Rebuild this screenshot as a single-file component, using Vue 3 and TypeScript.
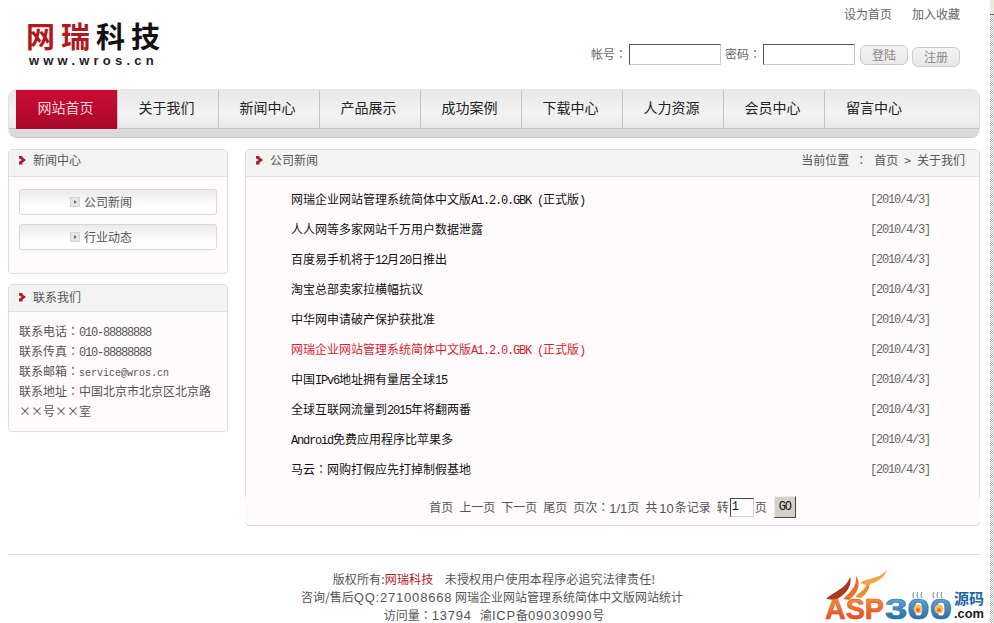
<script setup lang="ts">
const navItems = ['网站首页', '关于我们', '新闻中心', '产品展示', '成功案例', '下载中心', '人力资源', '会员中心', '留言中心']

type Part = { t: string; lat?: boolean; cl?: boolean }
type Row = { parts: Part[]; red?: boolean }

const product: Part[] = [
  { t: '网瑞企业网站管理系统简体中文版' },
  { t: 'A1.2.0.GBK (', lat: true },
  { t: '正式版' },
  { t: ')', lat: true },
]

const rows: Row[] = [
  { parts: product },
  { parts: [{ t: '人人网等多家网站千万用户数据泄露' }] },
  { parts: [{ t: '百度易手机将于' }, { t: '12', lat: true }, { t: '月' }, { t: '20', lat: true }, { t: '日推出' }] },
  { parts: [{ t: '淘宝总部卖家拉横幅抗议' }] },
  { parts: [{ t: '中华网申请破产保护获批准' }] },
  { parts: product, red: true },
  { parts: [{ t: '中国' }, { t: 'IPv6', lat: true }, { t: '地址拥有量居全球' }, { t: '15', lat: true }] },
  { parts: [{ t: '全球互联网流量到' }, { t: '2015', lat: true }, { t: '年将翻两番' }] },
  { parts: [{ t: 'Android', lat: true }, { t: '免费应用程序比苹果多' }] },
  { parts: [{ t: '马云' }, { t: '：', cl: true }, { t: '网购打假应先打掉制假基地' }] },
]
</script>

<template>
  <div class="page">
    <div class="scroll-edge"></div>
    <header class="top">
      <div class="logo">
        <div class="logo-cn"><span class="logo-red">网瑞</span><span>科技</span></div>
        <div class="logo-en">www.wros.cn</div>
      </div>
      <div class="top-right">
        <div class="links"><a>设为首页</a><a>加入收藏</a></div>
        <div class="login">
          <label>帐号<span class="cl">：</span></label><input class="field" type="text" />
          <label>密码<span class="cl">：</span></label><input class="field" type="password" />
          <button class="soft-btn" type="button">登陆</button>
          <button class="soft-btn lower" type="button">注册</button>
        </div>
      </div>
    </header>

    <nav class="nav">
      <a v-for="(n, i) in navItems" :key="n" class="nav-item" :class="{ active: i === 0, last: i === navItems.length - 1 }">{{ n }}</a>
    </nav>

    <main class="content">
      <aside class="side">
        <section class="box news-box">
          <h3 class="box-head"><i class="mark"></i>新闻中心</h3>
          <div class="cat-list">
            <a class="cat"><i class="tri"></i>公司新闻</a>
            <a class="cat"><i class="tri"></i>行业动态</a>
          </div>
        </section>
        <section class="box contact-box">
          <h3 class="box-head contact-head"><i class="mark"></i>联系我们</h3>
          <div class="contact">
            <p>联系电话<span class="cl">：</span><span class="lat">010-88888888</span></p>
            <p>联系传真<span class="cl">：</span><span class="lat">010-88888888</span></p>
            <p>联系邮箱<span class="cl">：</span><span class="mail">service@wros.cn</span></p>
            <p>联系地址<span class="cl">：</span>中国北京市北京区北京路××号××室</p>
          </div>
        </section>
      </aside>

      <section class="box list-box">
        <h3 class="box-head list-head">
          <span class="head-left"><i class="mark"></i>公司新闻</span>
          <span class="crumb"><span>当前位置</span><span class="cl">：</span><span>首页</span><span>&gt;</span><span>关于我们</span></span>
        </h3>
        <ul class="rows">
          <li v-for="(r, i) in rows" :key="i" class="row" :class="{ red: r.red }">
            <span class="title"><span v-for="(p, j) in r.parts" :key="j" :class="{ lat: p.lat, cl: p.cl }">{{ p.t }}</span></span>
            <span class="date">[2010/4/3]</span>
          </li>
        </ul>
        <div class="pager">
          <span>首页</span><span>上一页</span><span>下一页</span><span>尾页</span>
          <span>页次<span class="cl">：</span><b class="pg-num">1/1</b>页</span>
          <span>共<b class="pg-num wide">10</b>条记录</span>
          <span class="goto">转<input class="pg-input" type="text" value="1" />页</span>
          <button class="go" type="button">GO</button>
        </div>
      </section>
    </main>

    <footer class="foot">
      <p class="line-one">版权所有:<span class="foot-red">网瑞科技</span>&nbsp;&nbsp;&nbsp; 未授权用户使用本程序必追究法律责任!</p>
      <p class="line-two">咨询/售后<span class="foot-lat">QQ:271008668</span> 网瑞企业网站管理系统简体中文版网站统计</p>
      <p>访问量<span class="cl">：</span><span class="foot-lat">13794</span> &nbsp; 渝<span class="foot-lat">ICP</span>备<span class="foot-lat">09030990</span>号</p>
      <svg class="wm" width="166" height="54" viewBox="0 0 166 54" aria-label="ASP300源码">
        <defs>
          <linearGradient id="asp" x1="0" y1="0" x2="0" y2="1">
            <stop offset="0" stop-color="#f6a33c" />
            <stop offset="1" stop-color="#e03a1e" />
          </linearGradient>
          <linearGradient id="three" x1="0" y1="0" x2="0" y2="1">
            <stop offset="0" stop-color="#6bb4e0" />
            <stop offset="1" stop-color="#1c5c9c" />
          </linearGradient>
        </defs>
        <path d="M4 30 C12 22 24 20 28 8 C31 18 22 27 13 31 Z" fill="#a83a24" />
        <path d="M21 30 C28 23 35 18 34 7 C40 15 35 25 27 31 Z" fill="#ea6f2a" />
        <path d="M33 28 C39 22 46 19 46 10 C50 16 46 24 39 29 Z" fill="#f08c34" />
        <path d="M38 14 C46 8 56 11 65 1 C63 9 54 14 44 16 Z" fill="#f2a544" />
        <text x="3" y="50" class="wm-big" fill="url(#asp)" stroke="#e2521f" stroke-width="0.6" textLength="59" lengthAdjust="spacingAndGlyphs">ASP</text>
        <text x="63" y="50" class="wm-big" fill="url(#three)" stroke="#2a70ac" stroke-width="0.6" textLength="67" lengthAdjust="spacingAndGlyphs">300</text>
        <circle cx="96" cy="40" r="4.5" fill="#f4c060" />
        <circle cx="117" cy="40" r="4.5" fill="#f4c060" />
        <circle cx="96" cy="41" r="2" fill="#e8702c" />
        <circle cx="117" cy="41" r="2" fill="#e8702c" />
        <path d="M92 29 q-2 -3 0 -6 M96 29 q-2 -3 0 -6 M100 29 q-2 -3 0 -6 M112 29 q-2 -3 0 -6 M116 29 q-2 -3 0 -6 M120 29 q-2 -3 0 -6" stroke="#8c9aa4" stroke-width="1.1" fill="none" />
        <text x="132" y="35" class="wm-yuan" fill="#1c64a8">源码</text>
        <text x="132" y="49" class="wm-com" fill="#222" textLength="30" lengthAdjust="spacingAndGlyphs">.com</text>
      </svg>
    </footer>
  </div>
</template>

<style>
html, body { margin: 0; background: #fff; overflow: hidden; }
</style>

<style scoped>
.page {
  position: relative;
  width: 994px;
  height: 623px;
  overflow: hidden;
  padding: 0 14px 0 8px;
  box-sizing: border-box;
  font: 12px/20px "Noto Sans CJK SC", "Liberation Sans", sans-serif;
  color: #555;
  background: #fff;
}
.cl { font-family: "Noto Sans CJK TC", "Noto Sans CJK SC", sans-serif; }
.scroll-edge {
  position: absolute;
  right: 0;
  top: 0;
  bottom: 0;
  width: 4px;
  background: repeating-conic-gradient(#bdbdbd 0 25%, #fff 0 50%) 0 0 / 2px 2px;
}
.scroll-edge::before {
  content: "";
  display: block;
  height: 14px;
  background: #ece9dc;
  border-bottom: 1px solid #666;
}
.top { display: flex; justify-content: space-between; height: 89px; }
.logo { padding: 18px 0 0 18px; }
.logo-cn {
  font-size: 29px;
  line-height: 34px;
  font-weight: 700;
  letter-spacing: 6px;
  color: #111;
}
.logo-red { color: #b01a1e; }
.logo-en {
  margin-top: 1px;
  font: 700 13px/15px "Liberation Sans", sans-serif;
  letter-spacing: 4.2px;
  color: #222;
  padding-left: 3px;
}
.top-right { display: flex; flex-direction: column; align-items: flex-end; padding-right: 20px; }
.links { display: flex; gap: 20px; padding-top: 4px; height: 44px; box-sizing: border-box; color: #666; }
.login { display: flex; align-items: flex-start; height: 30px; color: #666; }
.login label { line-height: 20px; margin-right: 2px; }
.field {
  width: 90px;
  height: 19px;
  padding: 0;
  margin: 0 4px 0 0;
  box-sizing: content-box;
  border: 1px solid #ccc;
  border-top-color: #555;
  border-left-color: #555;
  background: #fff;
}
.soft-btn {
  width: 48px;
  height: 20px;
  margin: 1px 4px 0 1px;
  padding: 0;
  border: 1px solid #ccc;
  border-radius: 6px;
  background: linear-gradient(#f4f4f4, #e8e8e8);
  color: #888;
  font: inherit;
  line-height: 16px;
}
.soft-btn.lower { margin: 3px 0 0 0; }
.nav {
  display: flex;
  height: 48px;
  padding-left: 8px;
  border: 1px solid #ddd;
  border-top: 0;
  border-bottom: 1px solid #c9c9c9;
  border-radius: 9px;
  box-sizing: content-box;
  width: 962px;
  background: linear-gradient(#e8e8e8 0, #f3f3f3 26px, #e8e8e8 39px, #c4c4c4 39px, #c4c4c4 40px, #dcdcdc 40px, #d8d8d8 100%);
}
.nav-item {
  width: 101px;
  height: 39px;
  margin-top: 1px;
  padding-right: 3px;
  border-right: 1px solid #c4c4c4;
  box-sizing: border-box;
  text-align: center;
  font-size: 14px;
  line-height: 34px;
  color: #222;
}
.nav-item.last { border-right: 0; }
.nav-item.active {
  width: 102px;
  margin-left: -1px;
  padding-right: 2px;
  background: linear-gradient(#cb0c35, #a8082a) padding-box;
  color: #f5d8df;
}
.content { display: flex; align-items: flex-start; gap: 17px; margin-top: 11px; }
.side { width: 220px; flex: none; display: flex; flex-direction: column; gap: 10px; }
.box {
  border: 1px solid #ddd;
  border-radius: 4px;
  background: #fffbfd;
  box-sizing: border-box;
}
.box-head {
  display: flex;
  align-items: center;
  height: 20px;
  margin: 0;
  padding: 0 0 6px 10px;
  background: #f4f3f3;
  border-bottom: 1px solid #e2e2e2;
  font-size: 12px;
  font-weight: 400;
  color: #555;
}
.contact-head { height: 24px; padding-bottom: 2px; }
.mark {
  width: 7px;
  height: 9px;
  margin-right: 7px;
  flex: none;
  background: #a8202a;
  clip-path: polygon(0 0, 50% 0, 50% 20%, 100% 50%, 50% 80%, 50% 100%, 0 100%, 0 70%, 40% 50%, 0 30%);
}
.news-box { height: 125px; }
.contact-box { height: 148px; }
.cat-list { display: flex; flex-direction: column; gap: 9px; padding: 12px 10px 0; }
.cat {
  display: flex;
  align-items: center;
  height: 26px;
  padding-left: 50px;
  box-sizing: border-box;
  border: 1px solid #d8d8d8;
  border-radius: 3px;
  background: linear-gradient(#eaeaea 0, #f8f8f8 45%, #fff 70%);
  color: #555;
}
.tri {
  position: relative;
  width: 10px;
  height: 10px;
  margin-right: 4px;
  background: #e6e6e6;
  border: 1px solid #d4d4d4;
  box-sizing: border-box;
}
.tri::after {
  content: "";
  position: absolute;
  left: 3px;
  top: 2px;
  border-left: 3px solid #777;
  border-top: 2px solid transparent;
  border-bottom: 2px solid transparent;
}
.contact { padding: 9px 10px 0; }
.contact p { margin: 0; line-height: 20px; }
.lat {
  font-family: "Liberation Mono", monospace;
  letter-spacing: -1.2px;
  line-height: 1;
}
.mail {
  font: 10px/1 "Liberation Mono", monospace;
}
.list-box { width: 735px; height: 377px; flex: none; }
.list-head { justify-content: space-between; padding-right: 14px; }
.head-left { display: flex; align-items: center; }
.crumb { display: flex; gap: 6px; color: #555; }
.crumb .cl { margin-right: 1px; }
.rows { list-style: none; margin: 0; padding: 9px 49px 0 45px; }
.row { display: flex; justify-content: space-between; align-items: flex-start; height: 30px; line-height: 26px; color: #111; }
.row.red { color: #d81e2c; }
.date {
  font: 12px/29px "Liberation Mono", monospace;
  letter-spacing: -1.2px;
  color: #666;
}
.pager {
  display: flex;
  align-items: center;
  justify-content: center;
  gap: 6px;
  height: 20px;
  margin: 11px -1px 0;
  padding: 0 0 5px 0;
  background: #fffbfd;
  color: #555;
}
.pg-num { font: 400 13px/1 "Liberation Sans", sans-serif; position: relative; top: 1px; }
.pg-num.wide { margin: 0 1px 0 2px; }
.goto { display: flex; align-items: center; }
.pg-input {
  width: 21px;
  height: 17px;
  padding: 0 0 0 1px;
  margin: 0 1px;
  border: 1px solid #ccc;
  border-top-color: #444;
  border-left-color: #444;
  font: 12px "Liberation Mono", monospace;
  color: #111;
}
.go {
  width: 22px;
  height: 22px;
  margin-left: 1px;
  padding: 0;
  border: 1px solid;
  border-color: #eee #444 #444 #eee;
  background: #d4d0c8;
  font: 12px "Liberation Mono", monospace;
  letter-spacing: -1.2px;
  color: #111;
}
.foot {
  margin-top: 28px;
  border-top: 1px solid #ddd;
  width: 972px;
  padding-top: 15px;
  text-align: center;
  color: #555;
}
.foot p { margin: 0; line-height: 18px; }
.foot .line-one { letter-spacing: 0.15px; }
.foot .line-two { padding-right: 4px; }
.foot-red { color: #b01a1e; }
.foot-lat { font: 13px/1 "Liberation Sans", sans-serif; letter-spacing: 0.8px; }
.wm { position: absolute; left: 822px; top: 569px; }
.wm-big { font: 700 29px "Liberation Sans", sans-serif; }
.wm-yuan { font: 700 15px "Noto Sans CJK SC", sans-serif; }
.wm-com { font: 700 12px "Liberation Sans", sans-serif; }
</style>
